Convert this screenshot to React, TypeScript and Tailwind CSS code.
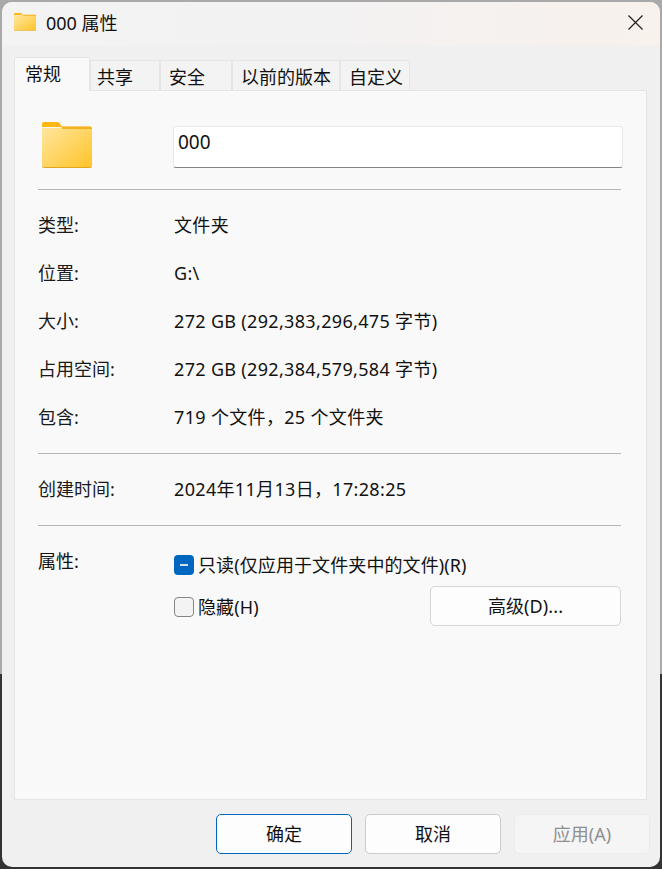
import React from 'react';

const font = "font-['Noto_Sans','Noto_Sans_CJK_SC',sans-serif]";

const tabs = [
  { label: '共享', width: 'w-[70px]', pad: 'pl-[6px]' },
  { label: '安全', width: 'w-[72px]', pad: 'pl-2' },
  { label: '以前的版本', width: 'w-[108px]', pad: 'pl-2' },
  { label: '自定义', width: 'w-[70px]', pad: 'pl-2' },
];

const sizeRows = [
  { label: '类型:', value: '文件夹' },
  { label: '位置:', value: 'G:\\' },
  { label: '大小:', value: '272 GB (292,383,296,475 字节)' },
  { label: '占用空间:', value: '272 GB (292,384,579,584 字节)' },
  { label: '包含:', value: '719 个文件，25 个文件夹' },
];

const FolderIcon = ({ className }: { className?: string }) => (
  <svg viewBox="0 0 50 46" preserveAspectRatio="none" className={className}>
    <defs>
      <linearGradient id="folderFill" x1="0" y1="0" x2="1" y2="1">
        <stop offset="0" stopColor="#ffe6a0" />
        <stop offset="1" stopColor="#ffc429" />
      </linearGradient>
    </defs>
    <path d="M0 2a2 2 0 0 1 2-2h13a4 4 0 0 1 3 1.500L20 5H0z" fill="#fdb813" />
    <path d="M0 6h17l3-1.500h28a2 2 0 0 1 2 2V43a2 2 0 0 1-2 2H2a2 2 0 0 1-2-2z" fill="url(#folderFill)" />
    <path d="M0 43a2 2 0 0 0 2 2h46a2 2 0 0 0 2-2v1a2 2 0 0 1-2 2H2a2 2 0 0 1-2-2z" fill="#e5a51c" />
    <path d="M20 4.500h28a2 2 0 0 1 2 2v.5H20z" fill="#f4b223" />
  </svg>
);

const Row = ({ label, value }: { label: string; value: string }) => (
  <div className="flex h-12 items-center">
    <div className="w-[136px] text-[#1a1a1a]">{label}</div>
    <div className="tracking-[0.33px]">{value}</div>
  </div>
);

export default function App() {
  return (
    <div className={`${font} h-[869px] w-[662px] overflow-hidden bg-[linear-gradient(to_bottom,#a9a9a9_0,#a9a9a9_674px,#333333_674px)] px-[2px] pt-[2px] text-[18px] leading-[26px] text-[#111111]`}>
      <div className="flex h-[865px] w-[658px] flex-col overflow-hidden rounded-[10px] bg-[#f0f0f0]">
        {/* title bar */}
        <div className="flex h-[43px] shrink-0 items-center bg-[linear-gradient(to_right,#f3f3f3,#f3f2f2_50%,#f8f1ec)] pl-3">
          <FolderIcon className="mb-[4px] h-[18px] w-[22px]" />
          <span className="mb-[2px] ml-[10px]">000 属性</span>
          <svg viewBox="0 0 16 16" className="mb-[2px] ml-auto mr-[17px] h-[15px] w-[15px] text-[#222222]" fill="none" stroke="currentColor" strokeWidth="1.300">
            <path d="M0.500 0.500 15.500 15.500M15.500 0.500 0.500 15.500" />
          </svg>
        </div>

        {/* tabs */}
        <div className="mt-3 flex h-[33px] shrink-0 items-end pl-3">
          <div className="z-10 -mb-px flex h-[34px] w-[76px] items-start rounded-t-[2px] border border-b-0 border-[#e5e5e5] bg-[#f9f9f9] pl-[10px] pt-[3px]">常规</div>
          {tabs.map((tab) => (
            <div key={tab.label} className={`${tab.width} ${tab.pad} flex h-[30px] items-center border border-b-0 border-[#e5e5e5] bg-[#f3f3f3] pt-[2px]`}>
              {tab.label}
            </div>
          ))}
        </div>

        {/* page */}
        <div className="ml-3 flex h-[710px] w-[633px] shrink-0 flex-col border border-[#e5e5e5] bg-[#f9f9f9] pl-[23px] pr-6">
          <div className="flex items-end pt-[31px]">
            <FolderIcon className="ml-1 h-[46px] w-[50px] shrink-0" />
            <div className="ml-[81px] flex h-[42px] w-[450px] shrink-0 items-start rounded-[3px] border border-[#e8e8e8] border-b-[#858585] bg-white pl-1 pt-[2px] text-[19px]">000</div>
          </div>
          <div className="mt-[21px] h-px w-[583px] bg-[#b5b5b5]" />
          <div className="pt-[11px]">
            {sizeRows.map((row) => (
              <Row key={row.label} {...row} />
            ))}
          </div>
          <div className="mt-3 h-px w-[583px] bg-[#b5b5b5]" />
          <div className="pt-[11px]">
            <Row label="创建时间:" value="2024年11月13日，17:28:25" />
          </div>
          <div className="mt-3 h-px w-[583px] bg-[#b5b5b5]" />

          <div className="mt-6 flex">
            <div className="-mt-[2px] w-[136px]">属性:</div>
            <div className="w-[447px] tracking-[0.1px]">
              <div className="flex h-[26px] items-center pt-[3px]">
                <div className="flex h-5 w-5 items-center justify-center rounded-[4px] bg-[#0067c0]">
                  <div className="h-[2px] w-2 bg-[#cfe2f3]" />
                </div>
                <span className="ml-[4px]">只读(仅应用于文件夹中的文件)(R)</span>
              </div>
              <div className="mt-[10px] flex items-center justify-between">
                <div className="flex items-center pt-[2px]">
                  <div className="h-5 w-5 rounded-[4px] border border-[#858585] bg-[#f3f3f3]" />
                  <span className="ml-[4px]">隐藏(H)</span>
                </div>
                <button className="h-10 w-[191px] rounded-[5px] border border-[#d5d5d5] bg-[#fdfdfd]">高级(D)...</button>
              </div>
            </div>
          </div>
        </div>

        {/* footer buttons */}
        <div className="mt-[14px] flex justify-end gap-[13px] pr-[10px]">
          <button className="h-[40px] w-[136px] rounded-[5px] border border-[#0067c0] bg-[#fdfdfd]">确定</button>
          <button className="h-[40px] w-[136px] rounded-[5px] border border-[#cccccc] bg-[#fdfdfd]">取消</button>
          <button className="h-[40px] w-[136px] rounded-[5px] border border-[#ebebeb] bg-[#f5f5f5] text-[#8f8f8f]">应用(A)</button>
        </div>
      </div>
    </div>
  );
}
